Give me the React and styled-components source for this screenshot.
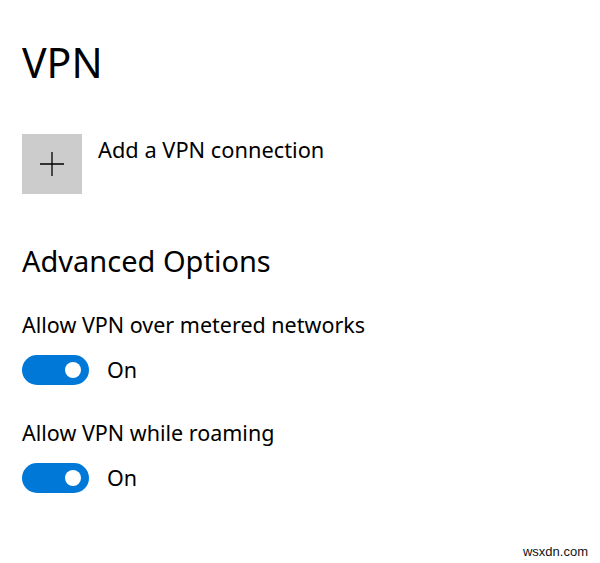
import React from 'react';
import styled, { createGlobalStyle } from 'styled-components';

const Global = createGlobalStyle`
  html, body { margin: 0; padding: 0; background: #fff; }
  body { font-family: "Noto Sans", "Open Sans", sans-serif; color: #000; }
`;

const Page = styled.div`
  position: relative;
  width: 600px;
  height: 563px;
  box-sizing: border-box;
  padding: 36px 0 0 22px;
  overflow: hidden;
`;

const Title = styled.h1`
  margin: 0;
  font-size: 41px;
  font-weight: 400;
  line-height: 52px;
`;

const AddRow = styled.div`
  display: flex;
  align-items: flex-start;
  gap: 16px;
  margin-top: 46px;
`;

const AddTile = styled.div`
  width: 60px;
  height: 60px;
  background: #cccccc;
  display: flex;
  align-items: center;
  justify-content: center;
`;

const AddLabel = styled.div`
  font-size: 21.8px;
  line-height: 28px;
  margin-top: 2px;
`;

const Section = styled.h2`
  margin: 48px 0 0;
  font-size: 29px;
  font-weight: 400;
  line-height: 38px;
`;

const Option = styled.div`
  margin-top: ${p => p.$top}px;
`;

const OptionLabel = styled.div`
  font-size: 21.5px;
  line-height: 28px;
`;

const ToggleRow = styled.div`
  display: flex;
  align-items: center;
  gap: 18px;
  margin-top: 16px;
`;

const Track = styled.div`
  width: 67px;
  height: 30px;
  border-radius: 15px;
  background: #0078d7;
  position: relative;
`;

const Knob = styled.span`
  position: absolute;
  top: 7px;
  right: 8px;
  width: 16px;
  height: 16px;
  border-radius: 50%;
  background: #fff;
`;

const State = styled.span`
  font-size: 21.5px;
  line-height: 28px;
`;

const Watermark = styled.div`
  position: absolute;
  right: 12px;
  bottom: 4px;
  font-family: "Liberation Sans", Arial, sans-serif;
  font-size: 13px;
  color: #111;
`;

const Plus = () => (
  <svg width="24" height="24" viewBox="0 0 24 24">
    <path d="M12 0V24M0 12H24" stroke="#000" strokeWidth="1.3" fill="none" />
  </svg>
);

const Toggle = () => (
  <ToggleRow>
    <Track><Knob /></Track>
    <State>On</State>
  </ToggleRow>
);

export default function App() {
  return (
    <Page>
      <Global />
      <Title>VPN</Title>
      <AddRow>
        <AddTile><Plus /></AddTile>
        <AddLabel>Add a VPN connection</AddLabel>
      </AddRow>
      <Section>Advanced Options</Section>
      <Option $top={31}>
        <OptionLabel>Allow VPN over metered networks</OptionLabel>
        <Toggle />
      </Option>
      <Option $top={34}>
        <OptionLabel>Allow VPN while roaming</OptionLabel>
        <Toggle />
      </Option>
      <Watermark>wsxdn.com</Watermark>
    </Page>
  );
}
